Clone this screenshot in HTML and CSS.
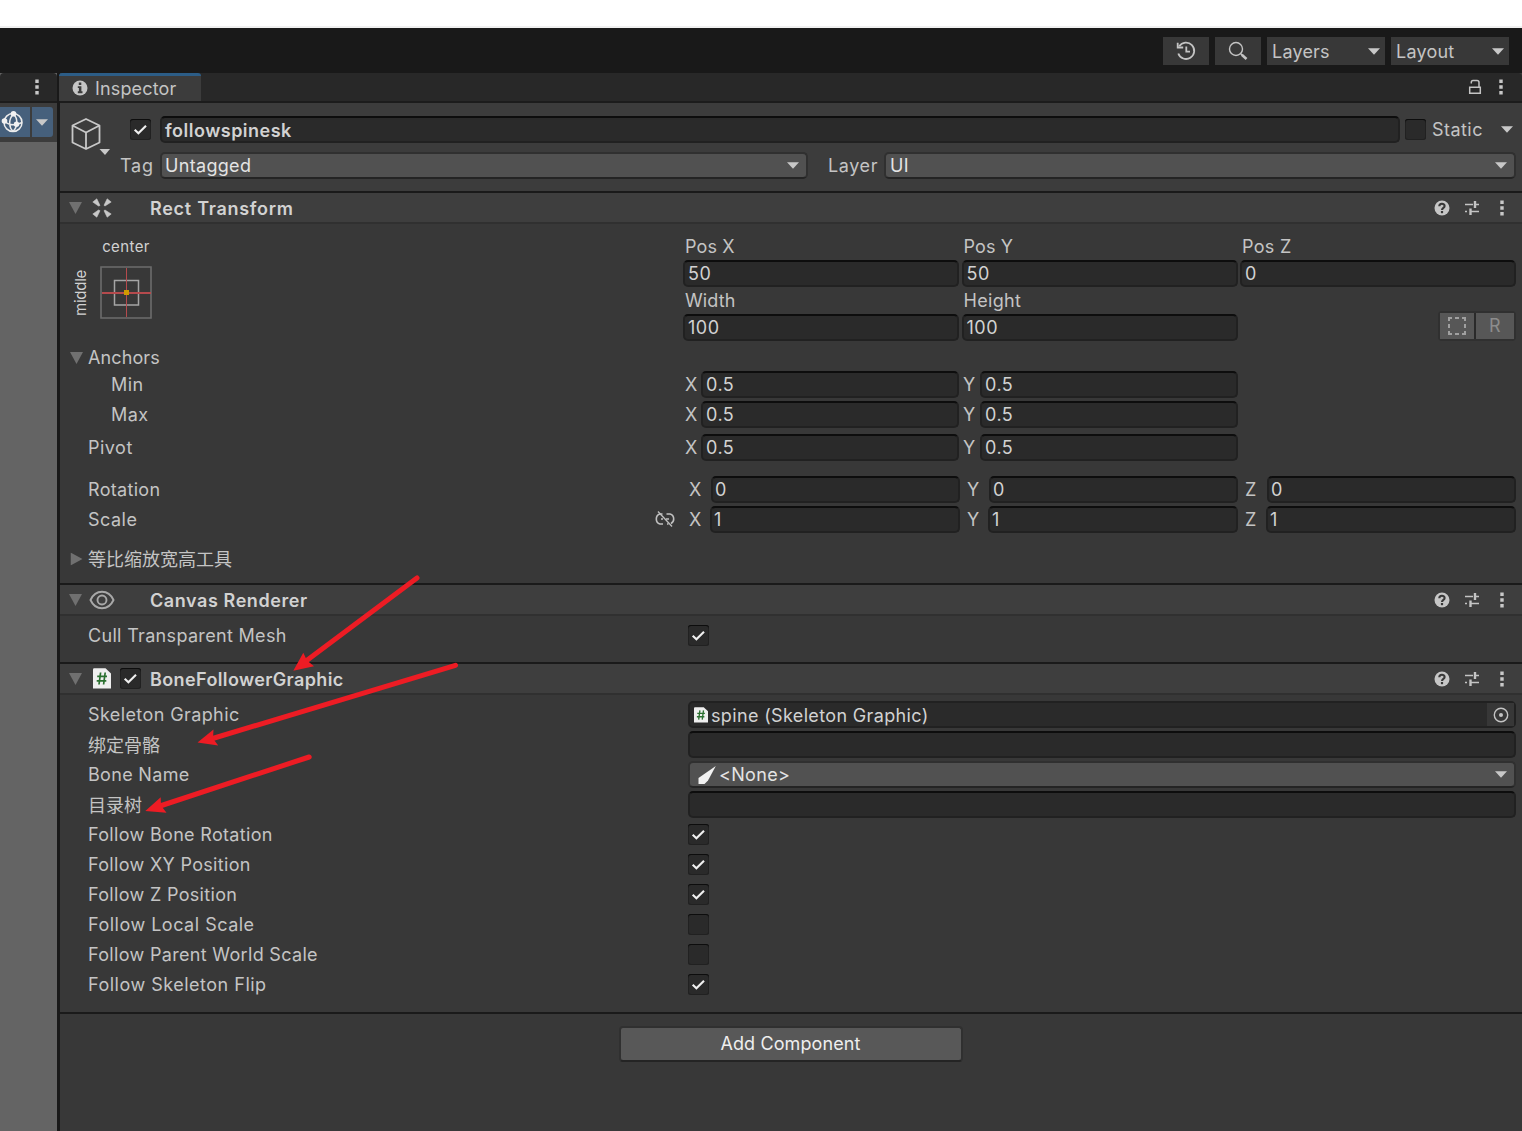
FILE: index.html
```html
<!DOCTYPE html>
<html lang="en">
<head>
<meta charset="utf-8">
<title>Inspector</title>
<link rel="stylesheet" href="styles.css">
</head>
<body>
<svg class="defs" width="0" height="0">
  <symbol id="check" viewBox="0 0 21 21"><path d="M4.700 10.800 8.400 14.300 16 6.700" fill="none" stroke="#f0f0f0" stroke-width="2.100"/></symbol>
  <symbol id="down" viewBox="0 0 12 7"><path d="M0 .3H12L6 6.800Z" fill="#c8c8c8"/></symbol>
  <symbol id="fold" viewBox="0 0 13 12"><path d="M0 0H13L6.500 12Z" fill="#707070"/></symbol>
  <symbol id="dots" viewBox="0 0 4 16"><path d="M.3 .5H3.700V3.900H.3ZM.3 6.300H3.700V9.700H.3ZM.3 12.100H3.700V15.500H.3Z" fill="#c8c8c8"/></symbol>
  <symbol id="help" viewBox="0 0 16 16"><circle cx="8" cy="8" r="7.500" fill="#c6c6c6"/><path d="M5.300 6.300C5.300 3 10.600 3 10.600 6 10.600 7.900 8 7.800 8 10" fill="none" stroke="#383838" stroke-width="2.100"/><path d="M6.900 11H9.100V13.200H6.900Z" fill="#383838"/></symbol>
  <symbol id="sliders" viewBox="0 0 16 16"><path d="M1 4.500H9M12 4.500H15M1 11.500H3M7 11.500H15" stroke="#c4c4c4" stroke-width="1.300"/><path d="M11 1V8M6.500 8.500V15" stroke="#c4c4c4" stroke-width="2.400"/></symbol>
  <symbol id="script" viewBox="0 0 18 21"><path d="M0 1.500Q0 .3 1.200 .3H12.500L18 5.500V20.500H0Z" fill="#efefef"/><path d="M7.600 4.500 6 16.500M12.200 4.500 10.600 16.500M4.200 8.300H14M3.700 12.800H13.300" fill="none" stroke="#2b7030" stroke-width="1.700"/></symbol>
</svg>

<div class="top-edge"></div>
<header class="main-toolbar">
  <button class="tool"><svg width="20" height="20" viewBox="0 0 20 20" fill="none" stroke="#c4c4c4" stroke-width="1.800"><path d="M3.200 5.200A8.200 8.200 0 1 1 2.300 12.500"/><path d="M1.700 1.800V6.500H7.200M10.300 5.500V10.700H14"/></svg></button>
  <button class="tool"><svg width="20" height="20" viewBox="0 0 20 20" fill="none" stroke="#c4c4c4"><circle cx="8" cy="8" r="6.500" stroke-width="1.400"/><path d="M12.300 12.300 14 14" stroke-width="1.300"/><path d="M13.800 13.800 18.500 18" stroke-width="2.600"/></svg></button>
  <button class="tool menu">Layers<svg width="12" height="7"><use href="#down"/></svg></button>
  <button class="tool menu">Layout<svg width="12" height="7"><use href="#down"/></svg></button>
</header>

<div class="workspace">
  <aside class="scene-dock">
    <div class="tabs"><svg width="4" height="16"><use href="#dots"/></svg></div>
    <div class="scene-tools">
      <span class="gizmo"><svg width="24" height="24" viewBox="0 0 24 24" fill="none" stroke="#ececec" stroke-width="1.500"><circle cx="13" cy="12.500" r="9"/><path d="M13.500 4C8 9.500 9 17.500 13 21.500M13.500 4C18 8.500 18 16.500 13 21.500M4 11C9 15.500 16 15.500 22 12.500"/><g fill="#f2f2f2" stroke="none"><circle cx="13.500" cy="3.800" r="2.800"/><circle cx="4.500" cy="11" r="2.800"/><circle cx="16.500" cy="14.300" r="2.700"/></g></svg></span>
      <span class="gizmo-menu"><svg width="12" height="7"><use href="#down"/></svg></span>
    </div>
  </aside>

  <main class="inspector">
    <div class="tabs">
      <div class="tab"><svg width="16" height="16" viewBox="0 0 16 16"><circle cx="8" cy="8" r="7.500" fill="#c6c6c6"/><path d="M6.800 2.500H9.300V5H6.800ZM5.800 6.200H9.400V11.200H10.500V13.200H5.800V11.200H6.900V8H5.800Z" fill="#3c3c3c"/></svg>Inspector</div>
      <svg class="lock" width="14" height="16" viewBox="0 0 14 16" fill="none" stroke="#c4c4c4" stroke-width="1.500"><path d="M1.700 8.200H12.300V14.200H1.700Z"/><path d="M3.300 4.500V3.300Q3.300 1.500 5 1.500H9Q11 1.500 11 3.500V8"/></svg>
      <svg width="4" height="16"><use href="#dots"/></svg>
    </div>

    <section class="object-header">
      <svg class="cube" width="36" height="40" viewBox="0 0 36 40"><path d="M15 1 28.500 7.500V24.500L15 31 1.500 24.500V7.500ZM1.500 7.500 15 14.500 28.500 7.500M15 14.500V31" fill="none" stroke="#c8c8c8" stroke-width="1.800" stroke-linejoin="round"/><path d="M28.500 31H39L34 37Z" fill="#c8c8c8"/></svg>
      <div class="object-fields">
        <div class="object-row">
          <span class="box active-box"><svg width="21" height="21"><use href="#check"/></svg></span>
          <div class="field name">followspinesk</div>
          <span class="box"></span>
          <span class="static">Static</span>
          <svg width="12" height="7"><use href="#down"/></svg>
        </div>
        <div class="object-row">
          <span class="tag">Tag</span>
          <div class="dropdown tag-menu">Untagged<svg width="12" height="7"><use href="#down"/></svg></div>
          <span class="layer">Layer</span>
          <div class="dropdown layer-menu">UI<svg width="12" height="7"><use href="#down"/></svg></div>
        </div>
      </div>
    </section>

    <section class="component">
      <div class="title"><svg class="fold" width="13" height="12"><use href="#fold"/></svg>
        <span class="icon"><svg width="20" height="20" viewBox="0 0 20 20" fill="#c8c8c8"><path d="M.8 4 4.800 .8 8 7.500 6.500 8ZM15.200 .8 19.200 4 13 8 12 7.300ZM.8 16 6.500 12 8 12.700 4.800 19.200ZM12 12.700 13 12 19.200 16 15.200 19.200Z" stroke="#c8c8c8" stroke-width=".6"/></svg></span><span class="enable"></span>
        <h2 class="loose">Rect Transform</h2>
        <svg width="16" height="16"><use href="#help"/></svg><svg width="16" height="16"><use href="#sliders"/></svg><svg class="last" width="4" height="16"><use href="#dots"/></svg></div>
      <div class="body rect-body">
        <div class="rect-top">
          <div class="preset">
            <span class="h">center</span><span class="v">middle</span>
            <svg width="52" height="53" viewBox="0 0 52 53" fill="none"><path d="M1 1H51V52H1Z" stroke="#6c6c6c" stroke-width="1.600"/><path d="M14.500 14.500H38.500V39H14.500Z" stroke="#a5a5a5" stroke-width="1.500"/><path d="M26.500 2V51" stroke="#b54a4d"/><path d="M2 27H51" stroke="#b54a4d" stroke-width="2"/><path d="M24 24H29V29H24Z" fill="#cf9a00"/></svg>
          </div>
          <div class="metrics">
            <span class="tight">Pos X</span><span class="tight">Pos Y</span><span>Pos Z</span>
            <div class="field">50</div><div class="field">50</div><div class="field">0</div>
            <span class="tight">Width</span><span>Height</span><span></span>
            <div class="field">100</div><div class="field">100</div>
            <div class="modes"><span><svg width="18" height="18" viewBox="0 0 18 18" fill="none" stroke="#a0a0a0" stroke-width="2"><path d="M1 4V1H4M7 1H11M14 1H17V4M17 7V11M17 14V17H14M11 17H7M4 17H1V14M1 11V7"/></svg></span><span>R</span></div>
          </div>
        </div>
        <div class="row anchors"><svg class="fold" width="13" height="12"><use href="#fold"/></svg><label class="tight">Anchors</label></div>
        <div class="row"><label class="sub loose">Min</label><div class="pair"><i>X</i><div class="field">0.5</div><i>Y</i><div class="field">0.5</div></div></div>
        <div class="row"><label class="sub loose">Max</label><div class="pair"><i>X</i><div class="field">0.5</div><i>Y</i><div class="field">0.5</div></div></div>
        <div class="row pivot"><label class="loose">Pivot</label><div class="pair"><i>X</i><div class="field">0.5</div><i>Y</i><div class="field">0.5</div></div></div>
        <div class="row rotation"><label>Rotation</label><div class="triple"><i>X</i><div class="field">0</div><i>Y</i><div class="field">0</div><i>Z</i><div class="field">0</div></div></div>
        <div class="row"><label class="loose">Scale</label><svg class="unlink" width="20" height="18" viewBox="0 0 20 18" fill="none" stroke="#c0c0c0" stroke-width="1.600"><path d="M7.500 4H5Q1.300 5 1.300 9T5 14H8M11.500 4H15Q18.700 5 18.700 9 18.700 12 16 13.500M12 14H13.500M6 9H8M11 9H14"/><path d="M3 1.500 17 16.500" stroke-width="1.300"/></svg><div class="triple scale"><i>X</i><div class="field">1</div><i>Y</i><div class="field">1</div><i>Z</i><div class="field">1</div></div></div>
        <div class="row ratio"><svg class="fold closed" width="13" height="12"><use href="#fold"/></svg><label class="zh">等比缩放宽高工具</label></div>
      </div>
    </section>

    <section class="component">
      <div class="title"><svg class="fold" width="13" height="12"><use href="#fold"/></svg>
        <span class="icon"><svg width="26" height="20" viewBox="0 0 26 20" fill="none" stroke="#a8a8a8" stroke-width="1.900"><path d="M1.500 10C6.500-1 19.500-1 24.500 10 19.500 21 6.500 21 1.500 10Z"/><circle cx="13" cy="10" r="4.500"/></svg></span><span class="enable"></span>
        <h2>Canvas Renderer</h2>
        <svg width="16" height="16"><use href="#help"/></svg><svg width="16" height="16"><use href="#sliders"/></svg><svg class="last" width="4" height="16"><use href="#dots"/></svg></div>
      <div class="body canvas-body">
        <div class="row"><label>Cull Transparent Mesh</label><span class="box"><svg width="21" height="21"><use href="#check"/></svg></span></div>
      </div>
    </section>

    <section class="component">
      <div class="title"><svg class="fold" width="13" height="12"><use href="#fold"/></svg>
        <span class="icon"><svg width="18" height="21"><use href="#script"/></svg></span><span class="enable"><span class="box"><svg width="21" height="21"><use href="#check"/></svg></span></span>
        <h2 class="snug">BoneFollowerGraphic</h2>
        <svg width="16" height="16"><use href="#help"/></svg><svg width="16" height="16"><use href="#sliders"/></svg><svg class="last" width="4" height="16"><use href="#dots"/></svg></div>
      <div class="body bone-body">
        <div class="row"><label class="snug">Skeleton Graphic</label><div class="field object"><svg width="14" height="16" viewBox="0 0 18 21" preserveAspectRatio="none"><use href="#script" width="18" height="21"/></svg><span>spine (Skeleton Graphic)</span><b><svg width="16" height="16" viewBox="0 0 16 16"><circle cx="8" cy="8" r="6.700" fill="none" stroke="#c4c4c4" stroke-width="1.400"/><circle cx="8" cy="8" r="2" fill="#c4c4c4"/></svg></b></div></div>
        <div class="row"><label class="zh">绑定骨骼</label><div class="field wide"></div></div>
        <div class="row"><label>Bone Name</label><div class="dropdown bone"><svg class="brush" width="20" height="20" viewBox="0 0 20 20"><path d="M18.800 1 11 15.500 7.500 19H1.500V13Z" fill="#f2f2f2"/></svg><span>&lt;None&gt;</span><svg width="12" height="7"><use href="#down"/></svg></div></div>
        <div class="row"><label class="zh">目录树</label><div class="field wide"></div></div>
        <div class="row"><label>Follow Bone Rotation</label><span class="box"><svg width="21" height="21"><use href="#check"/></svg></span></div>
        <div class="row"><label>Follow XY Position</label><span class="box"><svg width="21" height="21"><use href="#check"/></svg></span></div>
        <div class="row"><label>Follow Z Position</label><span class="box"><svg width="21" height="21"><use href="#check"/></svg></span></div>
        <div class="row"><label class="loose">Follow Local Scale</label><span class="box"></span></div>
        <div class="row"><label>Follow Parent World Scale</label><span class="box"></span></div>
        <div class="row"><label class="loose">Follow Skeleton Flip</label><span class="box"><svg width="21" height="21"><use href="#check"/></svg></span></div>
      </div>
    </section>

    <footer class="add"><button class="tight">Add Component</button></footer>
  </main>
</div>

<svg class="annotations" width="1522" height="1131" viewBox="0 0 1522 1131" fill="#ed1c24" stroke="#ed1c24">
  <path d="M417 578 306 661M455.500 665.300 211 739M309.200 757 160 806" stroke-width="5" stroke-linecap="round"/>
  <path d="M293.300 670.700 303.300 652.700 307 660.500 314 666.300ZM197.500 742.500 213.500 729.500 213 738.500 218.200 745.500ZM145.300 811 160.700 797.200 161 805.500 166.500 812.800Z" stroke="none"/>
</svg>
</body>
</html>
```
FILE: styles.css
```css
* { box-sizing: border-box; }
body {
  margin: 0;
  width: 1522px;
  height: 1131px;
  overflow: hidden;
  display: flex;
  flex-direction: column;
  background: #191919;
  color: #c4c4c4;
  font: 18px/27px Inter, "Noto Sans CJK SC", sans-serif;
  letter-spacing: .32px;
}
svg { display: block; flex: none; }
button { font: inherit; letter-spacing: inherit; color: inherit; border: 0; padding: 0; }
.defs { position: absolute; }
.tight { letter-spacing: .1px; }
.snug { letter-spacing: .4px; }
.loose { letter-spacing: .5px; }
.top-edge { height: 28px; flex: none; background: #fff; border-bottom: 2px solid #f0f0f0; }

.main-toolbar { height: 45px; flex: none; display: flex; gap: 6px; justify-content: flex-end; padding: 9px 13px 8px 0; }
.tool { width: 46px; background: #383838; display: flex; align-items: center; justify-content: center; }
.tool.menu { width: 118px; justify-content: space-between; padding: 0 5px; letter-spacing: .2px; }

.workspace { flex: 1; display: flex; gap: 3px; min-height: 0; }
.tabs { height: 30px; background: #282828; border-bottom: 2px solid #1c1c1c; display: flex; align-items: center; justify-content: flex-end; border-radius: 4px 4px 0 0; }
.scene-dock { width: 57px; background: #646464; }
.scene-dock .tabs { padding-right: 18px; }
.scene-tools { height: 39px; background: #3c3c3c; display: flex; gap: 2px; padding: 4px 4px 5px 0; }
.gizmo { width: 30px; background: #46607c; display: flex; align-items: center; }
.gizmo-menu { flex: 1; background: #46607c; border-radius: 0 3px 3px 0; display: flex; align-items: center; justify-content: center; padding-right: 1px; }

.inspector { flex: 1; background: #383838; }
.inspector .tabs { padding-right: 19px; }
.tab { width: 142px; height: 28px; margin: 0 auto 0 -1px; background: #3c3c3c; border-top: 3px solid #2c5d87; border-radius: 3px 3px 0 0; padding: 0 0 1px 13px; display: flex; align-items: center; gap: 7px; letter-spacing: .15px; }
.lock { margin-right: 17px; }

.field { height: 27px; background: #2a2a2a; border: 2px solid #212121; border-top-color: #0d0d0d; border-radius: 5px; color: #d2d2d2; padding-left: 3px; line-height: 24px; min-width: 0; letter-spacing: .5px; }
.dropdown { height: 27px; background: #515151; border: 2px solid #303030; border-bottom-color: #242424; border-radius: 5px; color: #e4e4e4; display: flex; align-items: center; justify-content: space-between; padding: 0 7px 0 3px; }
.box { width: 21px; height: 21px; flex: none; background: #2a2a2a; border-radius: 3px; box-shadow: inset 0 1px #0d0d0d, inset 0 0 0 1px #212121; }

.object-header { height: 88px; background: #3c3c3c; display: flex; padding: 13px 6px 0 11px; }
.cube { margin-top: 2px; overflow: visible; }
.object-fields { flex: 1; display: flex; flex-direction: column; gap: 9px; }
.object-row { display: flex; align-items: center; height: 27px; }
.active-box { margin: 0 9px 0 23px; }
.name { width: 1240px; margin-right: 5px; font-weight: 600; line-height: 26px; }
.static { width: 69px; margin-left: 6px; letter-spacing: .45px; }
.tag { width: 40px; margin-left: 13px; letter-spacing: .8px; }
.tag-menu { width: 648px; }
.layer { width: 56px; margin-left: 20px; letter-spacing: .6px; }
.layer-menu { flex: 1; padding-left: 4px; }

.title { height: 33px; background: #3e3e3e; border-top: 2px solid #1a1a1a; border-bottom: 2px solid #303030; display: flex; align-items: center; padding: 0 18px 0 9px; }
.title > svg { margin-right: 14px; }
.title > svg.fold { margin-right: 7px; }
.title > svg.last { margin: 0 0 0 6px; }
.icon { width: 26px; display: flex; justify-content: center; }
.enable { width: 35px; padding-left: 5px; }
.enable .box { display: block; }
h2 { flex: 1; margin: 0; padding-top: 2px; font-size: 18px; font-weight: 600; color: #d2d2d2; letter-spacing: .58px; }
h2.loose { letter-spacing: .72px; }
h2.snug { letter-spacing: .38px; }

.body { padding: 6px 6px 14px 28px; display: flex; flex-direction: column; gap: 3px; }
.rect-body { height: 359px; padding-top: 9px; }
.canvas-body { height: 46px; }
.row { height: 27px; flex: none; display: flex; align-items: center; }
.row > label { width: 600px; }
.row > .sub { width: 577px; margin-left: 23px; }
.row > .zh { font-family: "Noto Sans CJK SC", sans-serif; letter-spacing: 0; padding-bottom: 1px; line-height: 26px; }
.rect-top { height: 108px; display: flex; justify-content: space-between; }
.metrics { width: 833px; display: grid; grid-template-columns: repeat(3, 276px); grid-auto-rows: 27px; column-gap: 2.5px; }
.metrics > span { padding-left: 2px; }
.preset { width: 80px; margin: 0 0 0 -16px; display: grid; grid-template-columns: 28px 52px; grid-template-rows: 33px 53px; font-size: 15px; letter-spacing: .4px; color: #d2d2d2; }
.preset .h { grid-column: 2; text-align: center; white-space: nowrap; }
.preset .v { writing-mode: vertical-rl; transform: rotate(180deg); text-align: center; width: 18px; height: 53px; line-height: 18px; letter-spacing: -.25px; }
.modes { justify-self: end; width: 78px; height: 30px; margin-top: -3px; display: grid; grid-template-columns: 34px 1fr; gap: 2px; background: #2a2a2a; border: 2px solid #303030; border-radius: 4px; }
.modes span { background: #575757; color: #8c8c8c; display: flex; align-items: center; justify-content: center; line-height: 24px; }
.anchors .fold, .ratio .fold { margin: 0 5px 0 -18px; }
.closed { transform: rotate(-90deg); }
.anchors + .row { margin-top: -3px; }
.row.pivot { margin-top: 3px; }
.row.rotation { margin-top: 12px; }
.row.ratio { margin-top: 9px; }
i { font-style: normal; }
.row > .pair { width: 555px; margin-left: -5px; display: grid; grid-template-columns: 18px 258px 21px 258px; }
.pair i { padding-left: 2px; }
.pair i + .field + i { padding-left: 4px; }
.triple { width: 828px; display: grid; grid-template-columns: 23px 249px 29px 249px 29px 249px; }
.triple.scale { grid-template-columns: 22px 250px 28px 250px 28px 250px; }
.triple i { padding-left: 1px; }
.triple .field { padding-left: 2px; }
.triple .field + i { padding-left: 7px; }
.unlink { margin: -2px 13px 0 -33px; }
.wide, .object, .bone { width: 828px; }
.object { display: flex; align-items: center; border-color: #212121; gap: 3px; padding-left: 4px; letter-spacing: .35px; }
.object svg { margin-top: 1px; }
.object span { padding-top: 2px; }
.object b svg { margin: 0; }
.object b { width: 27px; height: 23px; margin-left: auto; background: #373737; display: flex; align-items: center; justify-content: center; }
.bone { gap: 2px; padding-left: 7px; }
.bone span { flex: 1; }

.add { border-top: 2px solid #1a1a1a; display: flex; justify-content: center; padding: 12px 1px 0 0; }
.add button { width: 344px; height: 36px; background: #585858; border: 2px solid #303030; border-bottom-color: #242424; border-radius: 4px; color: #eee; padding-bottom: 1px; }

/* Callout arrows drawn over the panel */
.annotations { position: absolute; left: 0; top: 0; pointer-events: none; }
```
